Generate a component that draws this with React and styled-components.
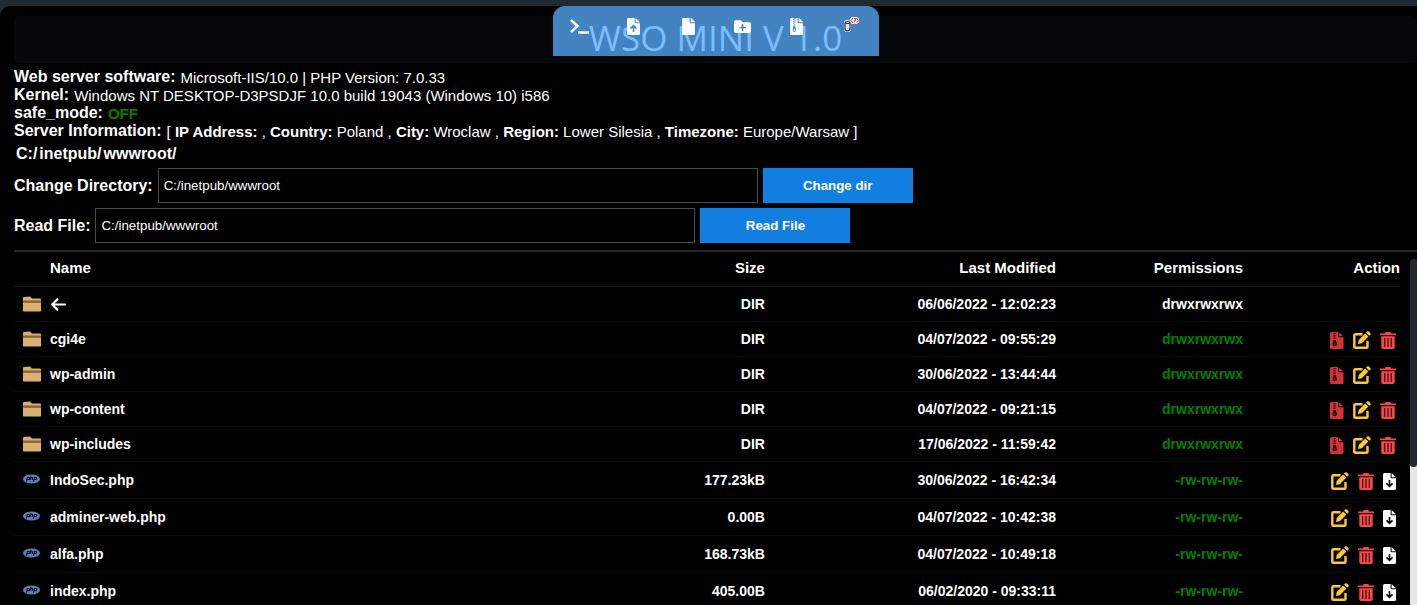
import React from 'react';
import styled, { createGlobalStyle } from 'styled-components';
import { FaFile, FaFileArchive, FaFolderPlus } from 'react-icons/fa';
import { FaArrowLeft } from 'react-icons/fa6';

const GlobalStyle = createGlobalStyle`
  * {
    box-sizing: border-box;
  }

  body {
    margin: 0;
    background: #212932;
    color: #fff;
    font-family: 'Liberation Sans', Arial, sans-serif;
    overflow: hidden;
  }
`;

const Page = styled.main`
  display: flex;
  flex-direction: column;
  height: calc(100vh - 6px);
  margin-top: 6px;
  padding: 10px 0 0 14px;
  background: #000;
  border-top-left-radius: 10px;
`;

const Header = styled.header`
  display: flex;
  justify-content: center;
  flex-shrink: 0;
  height: 47px;
  background: #050709;
  border-radius: 5px;
`;

const Tab = styled.div`
  position: relative;
  width: 326px;
  height: 50px;
  margin-top: -10px;
  border-radius: 12px 12px 0 0;
  background: #4384c0;
`;

const Title = styled.h1`
  margin: 0;
  padding-top: 8px;
  color: #7cbdff;
  font-family: 'Open Sans', 'Noto Sans', sans-serif;
  font-size: 35px;
  font-weight: 400;
  line-height: 48px;
  text-align: center;
  white-space: nowrap;
`;

const Tools = styled.nav`
  position: absolute;
  inset: 0;
  display: grid;
  grid-template-columns: repeat(6, 1fr);
  height: 40px;
`;

const IconButton = styled.button`
  display: flex;
  align-items: center;
  justify-content: center;
  padding: 0;
  border: 0;
  background: none;
  color: ${({ $color }) => $color || '#fff'};
  font-size: 17px;
  cursor: pointer;
`;

const Info = styled.section`
  padding-top: 6px;
`;

const InfoLine = styled.div`
  display: flex;
  align-items: center;
  gap: 5px;
  height: 18px;
  font-size: 15px;
  line-height: 18px;
  white-space: pre;
`;

const Label = styled.label`
  font-size: 16px;
  font-weight: 700;
`;

const InfoLabel = styled.b`
  padding-bottom: 2px;
  font-size: 16px;
`;

const Off = styled.b`
  color: #008000;
`;

const Path = styled.nav`
  display: flex;
  gap: 2px;
  padding: 4px 2px 5px;
  line-height: 18px;
`;

const PathLink = styled.a`
  color: #fff;
  font-size: 16px;
  font-weight: 700;
  text-decoration: none;
`;

const FormRow = styled.form`
  display: flex;
  align-items: center;
  gap: 5px;
  margin-bottom: 5px;
`;

const TextInput = styled.input`
  width: 600px;
  height: 35px;
  padding: 0 5px;
  border: 1px solid #4b4b4b;
  background: #000;
  color: #fff;
  font-family: inherit;
`;

const Submit = styled.button`
  width: 150px;
  height: 35px;
  padding: 0;
  border: 0;
  background: #127fe0;
  color: #fff;
  font-family: inherit;
  font-weight: 700;
  cursor: pointer;
`;

const Listing = styled.section`
  display: flex;
  flex: 1;
  min-height: 0;
  margin-top: 2px;
  border-top: 2px solid #262626;
`;

const ListingBody = styled.div`
  flex: 1;
  min-width: 0;
  margin-right: 10px;
  overflow: hidden;
`;

const Rail = styled.div`
  width: 7px;
  margin-top: 7px;
  background: linear-gradient(#000 10px, #e6e6e6 10px);
`;

const Thumb = styled.div`
  height: 208px;
  border-radius: 3px;
  background: #212932;
`;

const Table = styled.table`
  width: 100%;
  table-layout: fixed;
  border-collapse: separate;
  border-spacing: 0;
  font-size: 14px;
  font-weight: 700;
`;

const Th = styled.th`
  width: ${({ $width }) => $width};
  height: 35px;
  padding: 0 ${({ $flush }) => ($flush ? 0 : 8)}px 4px 8px;
  border-bottom: 1px solid #161616;
  font-size: 15px;
  text-align: ${({ $left }) => ($left ? 'left' : 'right')};
`;

const Row = styled.tr`
  height: ${({ $file }) => ($file ? 37 : 35)}px;
`;

const Td = styled.td`
  padding: 0 8px;
  border-bottom: 1px solid #0b0b0b;
  color: ${({ $color }) => $color || '#fff'};
  text-align: ${({ $left }) => ($left ? 'left' : 'right')};
  white-space: nowrap;
`;

const IconCell = styled(Td)`
  padding: 0 0 0 9px;
  text-align: left;

  svg {
    display: block;
  }
`;

const NameLink = styled.a`
  color: #fff;
  text-decoration: none;

  svg {
    display: block;
  }
`;

const Actions = styled.div`
  display: flex;
  align-items: center;
  justify-content: flex-end;
  gap: 9px;
  margin-right: -4px;
  padding-top: 2px;
`;

const TerminalIcon = () => (
  <svg width="19" height="15" viewBox="0 0 19 15" fill="none" stroke="#fff" strokeWidth="2.4">
    <path d="M1 1 L7.5 7 L1 13" />
    <path d="M8 13.5 H19" />
  </svg>
);

const DatabaseIcon = () => (
  <svg width="16" height="18" viewBox="0 0 16 18">
    <path d="M1 5.5 Q1 3 4.5 3 Q8 3 8 5.5 V12.5 Q8 15 4.5 15 Q1 15 1 12.5Z" fill="#fff" />
    <path
      d="M2 6 Q2 4.5 4.5 4.5 Q7 4.5 7 6 V12 Q7 13.8 4.5 13.8 Q2 13.8 2 12Z"
      fill="#dce9f2"
      stroke="#12343f"
      strokeWidth="1.2"
    />
    <path d="M2.5 6.5 H6.5" stroke="#12343f" />
    <path d="M9 0 H14 L16 2 V5 L14 7 H9 L7 5 V2Z" fill="#fff" />
    <path
      d="M10 1 L8 3.5 L10 6 M13.5 1 L15.5 3.5 L13.5 6 M11 1.5 H12.5 V3.5 H11.5 V4.5 M11.5 5.5 V6.5"
      fill="none"
      stroke="#e01b1b"
    />
  </svg>
);

const FileArrowIcon = ({ arrow, hole }) => (
  <svg width="13" height="17" viewBox="0 0 13 17">
    <path
      d="M1.5 0 H7.6 V4.2 Q7.6 5.2 8.6 5.2 H13 V15.5 Q13 17 11.5 17 H1.5 Q0 17 0 15.5 V1.5 Q0 0 1.5 0Z"
      fill="currentColor"
    />
    <path d="M8.6 0 L13 4.3 H8.6Z" fill="currentColor" />
    <path d={arrow} fill="none" stroke={hole} strokeWidth="1.6" />
  </svg>
);

const UploadIcon = () => (
  <FileArrowIcon arrow="M6.5 14 V8 M3.5 10.6 L6.5 7.7 L9.5 10.6" hole="#4384c0" />
);

const DownloadIcon = () => (
  <FileArrowIcon arrow="M6.5 7 V13 M3.5 10.4 L6.5 13.3 L9.5 10.4" hole="#000" />
);

const ZipIcon = () => (
  <svg width="14" height="17" viewBox="0 0 14 17">
    <path
      d="M1.5 0 H8 V4.2 Q8 5.2 9 5.2 H13.5 V15.5 Q13.5 17 12 17 H1.5 Q0 17 0 15.5 V1.5 Q0 0 1.5 0Z"
      fill="currentColor"
    />
    <path d="M9 0.5 L13.2 4.3 H9Z" fill="currentColor" />
    <path d="M4.5 1 V9" stroke="#300606" strokeWidth="2" strokeDasharray="1.3 1" />
    <path d="M3.7 8.5 H5.8 L7 12 Q7 14.2 4.8 14.2 Q2.5 14.2 2.5 12Z" fill="#1d0202" />
    <path d="M4 12 H5.6" stroke="currentColor" strokeWidth="1.2" />
  </svg>
);

const EditIcon = () => (
  <svg width="18" height="18" viewBox="0 0 18 18">
    <path
      d="M9.5 3.2 H2.6 Q1.3 3.2 1.3 4.5 V15.4 Q1.3 16.7 2.6 16.7 H13.2 Q14.5 16.7 14.5 15.4 V10"
      fill="none"
      stroke="currentColor"
      strokeWidth="2.4"
    />
    <path d="M12.2 2.4 L15.4 5.6 L8.8 12.2 L5 13 L5.7 9Z" fill="currentColor" />
    <path d="M13 1.6 L14 0.6 Q15 -0.3 16 0.6 L17.3 1.9 Q18.2 2.9 17.3 3.8 L16.2 4.8Z" fill="currentColor" />
  </svg>
);

const TrashIcon = () => (
  <svg width="16" height="17" viewBox="0 0 16 17">
    <path d="M0 1.6 H5 L5.6 0 H10.4 L11 1.6 H16 V3.2 H0Z" fill="currentColor" />
    <path d="M1.3 4.2 H14.7 V15.2 Q14.7 17 13 17 H3 Q1.3 17 1.3 15.2Z" fill="currentColor" />
    <path d="M4.7 6 V15 M8 6 V15 M11.3 6 V15" stroke="#4d1012" strokeWidth="1.3" />
  </svg>
);

const FolderIcon = () => (
  <svg width="18" height="16" viewBox="0 0 18 16">
    <path d="M0 2 Q0 1 1 1 L7 0.5 L9 2.5 H17 Q18 2.5 18 3.5 V5 H0Z" fill="#d9ae6c" />
    <path d="M0 4.5 H18 V6.5 H0Z" fill="#8a6426" />
    <path d="M0 6.5 H18 V15 Q18 15.5 17 15.5 H1 Q0 15.5 0 15Z" fill="#dbb070" />
  </svg>
);

const PhpIcon = () => (
  <svg width="17" height="14" viewBox="0 0 17 14">
    <ellipse cx="8.5" cy="6" rx="8.5" ry="4.5" fill="#5f7fb8" />
    <path
      d="M3.4 8.6 L4.4 4.5 H5.8 Q7 4.8 6.4 6 Q6 6.9 4 6.7 M8 2.8 L7 7 M7.6 4.6 H9 Q9.8 4.6 9.5 5.6 L9.2 7 M10.4 8.6 L11.4 4.5 H12.8 Q14 4.8 13.4 6 Q13 6.9 11 6.7"
      fill="none"
      stroke="#10131c"
      strokeWidth="1.1"
    />
  </svg>
);

const tools = [
  { title: 'Terminal', icon: <TerminalIcon /> },
  { title: 'Upload file', icon: <UploadIcon /> },
  { title: 'New file', icon: <FaFile /> },
  { title: 'New folder', icon: <FaFolderPlus /> },
  { title: 'Archive', icon: <FaFileArchive /> },
  { title: 'Database', icon: <DatabaseIcon /> },
];

const location = [
  ['IP Address:', ' , '],
  ['Country:', ' Poland , '],
  ['City:', ' Wroclaw , '],
  ['Region:', ' Lower Silesia , '],
  ['Timezone:', ' Europe/Warsaw ]'],
];

const folders = [
  { name: 'cgi4e', modified: '04/07/2022 - 09:55:29' },
  { name: 'wp-admin', modified: '30/06/2022 - 13:44:44' },
  { name: 'wp-content', modified: '04/07/2022 - 09:21:15' },
  { name: 'wp-includes', modified: '17/06/2022 - 11:59:42' },
];

const files = [
  { name: 'IndoSec.php', size: '177.23kB', modified: '30/06/2022 - 16:42:34' },
  { name: 'adminer-web.php', size: '0.00B', modified: '04/07/2022 - 10:42:38' },
  { name: 'alfa.php', size: '168.73kB', modified: '04/07/2022 - 10:49:18' },
  { name: 'index.php', size: '405.00B', modified: '06/02/2020 - 09:33:11' },
];

function PathForm({ id, label, button }) {
  return (
    <FormRow onSubmit={(e) => e.preventDefault()}>
      <Label htmlFor={id}>{label}</Label>
      <TextInput id={id} type="text" defaultValue="C:/inetpub/wwwroot" />
      <Submit type="submit">{button}</Submit>
    </FormRow>
  );
}

function EntryRow({ entry, file }) {
  return (
    <Row $file={file}>
      <IconCell>{file ? <PhpIcon /> : <FolderIcon />}</IconCell>
      <Td $left>
        <NameLink href="#">{entry.name}</NameLink>
      </Td>
      <Td>{file ? entry.size : 'DIR'}</Td>
      <Td>{entry.modified}</Td>
      <Td $color="#008000">{file ? '-rw-rw-rw-' : 'drwxrwxrwx'}</Td>
      <Td>
        <Actions>
          {!file && (
            <IconButton $color="#cf3438" aria-label="Compress">
              <ZipIcon />
            </IconButton>
          )}
          <IconButton $color="#ffc934" aria-label="Edit">
            <EditIcon />
          </IconButton>
          <IconButton $color="#f5484d" aria-label="Delete">
            <TrashIcon />
          </IconButton>
          {file && (
            <IconButton aria-label="Download">
              <DownloadIcon />
            </IconButton>
          )}
        </Actions>
      </Td>
    </Row>
  );
}

export default function App() {
  return (
    <>
      <GlobalStyle />
      <Page>
        <Header>
          <Tab>
            <Title>WSO MINI V 1.0</Title>
            <Tools>
              {tools.map(({ title, icon }) => (
                <IconButton key={title} aria-label={title}>
                  {icon}
                </IconButton>
              ))}
            </Tools>
          </Tab>
        </Header>

        <Info>
          <InfoLine>
            <InfoLabel>Web server software:</InfoLabel>
            <span>Microsoft-IIS/10.0 | PHP Version: 7.0.33</span>
          </InfoLine>
          <InfoLine>
            <InfoLabel>Kernel:</InfoLabel>
            <span>Windows NT DESKTOP-D3PSDJF 10.0 build 19043 (Windows 10) i586</span>
          </InfoLine>
          <InfoLine>
            <InfoLabel>safe_mode:</InfoLabel>
            <Off>OFF</Off>
          </InfoLine>
          <InfoLine>
            <InfoLabel>Server Information:</InfoLabel>
            <span>
              {'[ '}
              {location.map(([key, value]) => (
                <React.Fragment key={key}>
                  <b>{key}</b>
                  {value}
                </React.Fragment>
              ))}
            </span>
          </InfoLine>
          <Path>
            <PathLink href="#">C:/</PathLink>
            <PathLink href="#">inetpub/</PathLink>
            <PathLink href="#">wwwroot/</PathLink>
          </Path>
        </Info>

        <PathForm id="dir" label="Change Directory:" button="Change dir" />
        <PathForm id="file" label="Read File:" button="Read File" />

        <Listing>
          <ListingBody>
            <Table>
              <thead>
                <tr>
                  <Th $width="28px" />
                  <Th $left>Name</Th>
                  <Th $width="120px">Size</Th>
                  <Th $width="21%">Last Modified</Th>
                  <Th $width="187px">Permissions</Th>
                  <Th $width="149px" $flush>
                    Action
                  </Th>
                </tr>
              </thead>
              <tbody>
                <Row>
                  <IconCell>
                    <FolderIcon />
                  </IconCell>
                  <Td $left>
                    <NameLink href="#" aria-label="Parent directory">
                      <FaArrowLeft size={17} />
                    </NameLink>
                  </Td>
                  <Td>DIR</Td>
                  <Td>06/06/2022 - 12:02:23</Td>
                  <Td>drwxrwxrwx</Td>
                  <Td />
                </Row>
                {folders.map((entry) => (
                  <EntryRow key={entry.name} entry={entry} />
                ))}
                {files.map((entry) => (
                  <EntryRow key={entry.name} entry={entry} file />
                ))}
              </tbody>
            </Table>
          </ListingBody>
          <Rail>
            <Thumb />
          </Rail>
        </Listing>
      </Page>
    </>
  );
}
